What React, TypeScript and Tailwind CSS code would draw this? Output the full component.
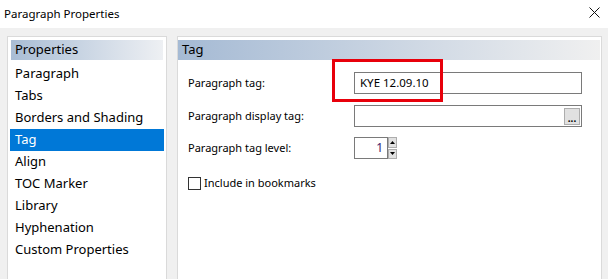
import type React from 'react';

const items = [
  'Paragraph',
  'Tabs',
  'Borders and Shading',
  'Tag',
  'Align',
  'TOC Marker',
  'Library',
  'Hyphenation',
  'Custom Properties',
];

const font = { fontFamily: '"Noto Sans", "Open Sans", sans-serif' };

const App: React.FC = () => {
  return (
    <div
      className="relative w-[608px] h-[279px] overflow-hidden bg-[#f0f0f0] flex flex-col text-black"
      style={font}
    >
      {/* title bar */}
      <div className="shrink-0 h-[28px] bg-white flex items-center justify-between pl-[4px] pr-[7px]">
        <span className="text-[11.5px] leading-none">Paragraph Properties</span>
        <svg width="11" height="11" viewBox="0 0 11 11" className="mr-[1px] -mt-[4px]">
          <path d="M0.5 0.5 L10.5 10.5 M10.5 0.5 L0.5 10.5" stroke="#111" strokeWidth="1" />
        </svg>
      </div>

      <div className="shrink-0 flex pt-[8px] pl-[7px] gap-[10px]">
        {/* left list */}
        <div className="shrink-0 w-[160px] h-[300px] bg-white border border-[#dadada] px-[2px] pt-[3px]">
          <div className="h-[20px] ml-[1px] mr-[1px] flex items-center pl-[4px] text-[13px] bg-gradient-to-r from-[#a9bdd5] to-[#eef0f3]">
            Properties
          </div>
          <div className="mt-[3px] flex flex-col">
            {items.map((it) => (
              <div
                key={it}
                className={
                  it === 'Tag'
                    ? 'h-[22px] flex items-center pl-[5px] text-[13px] bg-[#0078d7] text-white'
                    : 'h-[22px] flex items-center pl-[5px] text-[13px]'
                }
              >
                {it}
              </div>
            ))}
          </div>
        </div>

        {/* right panel */}
        <div className="shrink-0 w-[425px] h-[300px] bg-white border border-[#dadada] pl-0 pr-[1px] pt-[3px]">
          <div className="h-[20px] flex items-center pl-[4px] text-[13px] bg-gradient-to-r from-[#a5bad4] to-[#f0f0f0]">
            Tag
          </div>
          <div className="pl-[10px] pr-[18px] text-[11px]">
            <div className="mt-[12px] flex items-center h-[22px]">
              <span className="w-[166px]">Paragraph tag:</span>
              <div className="flex-1 h-[22px] border border-[#7a7a7a] flex items-center pl-[5px] text-[11.5px]">
                KYE 12.09.10
              </div>
            </div>
            <div className="mt-[11px] flex items-center h-[22px]">
              <span className="w-[166px]">Paragraph display tag:</span>
              <div className="flex-1 h-[22px] border border-[#7a7a7a] flex items-center justify-end pr-[1px]">
                <div className="w-[16px] h-[17px] bg-[#e1e1e1] border border-[#adadad] flex items-end justify-center text-[10px] leading-[12px] font-bold">
                  ...
                </div>
              </div>
            </div>
            <div className="mt-[10px] flex items-center h-[22px]">
              <span className="w-[166px]">Paragraph tag level:</span>
              <div className="w-[34px] h-[22px] border border-[#7a7a7a] flex items-center justify-end pr-[4px] text-[12px] text-[#3b1a6b]">
                1
              </div>
              <div className="w-[9px] h-[22px] flex flex-col gap-[1px] bg-white">
                <div className="flex-1 bg-[#e1e1e1] border border-[#adadad] flex items-center justify-center">
                  <svg width="5" height="3" viewBox="0 0 5 3">
                    <path d="M2.5 0 L5 3 L0 3 Z" fill="#000" />
                  </svg>
                </div>
                <div className="flex-1 bg-[#e1e1e1] border border-[#adadad] flex items-center justify-center">
                  <svg width="5" height="3" viewBox="0 0 5 3">
                    <path d="M0 0 L5 0 L2.5 3 Z" fill="#000" />
                  </svg>
                </div>
              </div>
            </div>
            <div className="mt-[18px] flex items-center gap-[3px] h-[13px]">
              <div className="w-[13px] h-[13px] border border-[#333] bg-white" />
              <span>Include in bookmarks</span>
            </div>
          </div>
        </div>
      </div>

      {/* red annotation box */}
      <div className="absolute left-[332px] top-[59px] w-[111px] h-[43px] border-[3px] border-[#e8000b]" />
    </div>
  );
};

export default App;
